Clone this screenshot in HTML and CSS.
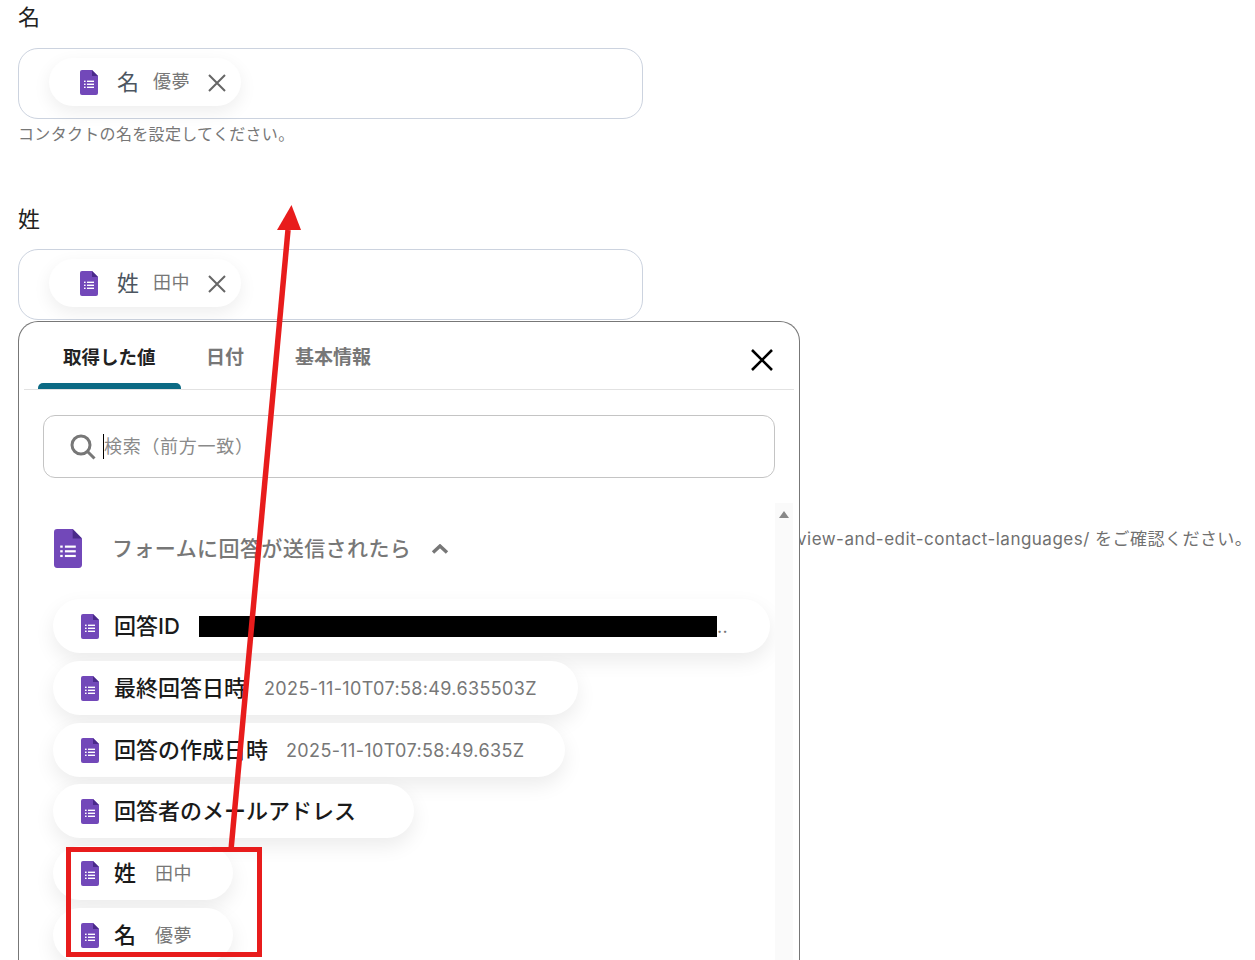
FILE: index.html
```html
<!DOCTYPE html>
<html lang="ja">
<head>
    <meta charset="UTF-8">
    <title>コンタクトの設定</title>
    <link rel="stylesheet" href="styles.css">
</head>
<body>
    <svg class="defs" width="0" height="0">
        <symbol id="forms" viewBox="0 0 18 25">
            <path d="M2 0H12L18 6V23A2 2 0 0 1 16 25H2A2 2 0 0 1 0 23V2A2 2 0 0 1 2 0Z" fill="#7248b9"/>
            <path d="M12 0L18 6H12Z" fill="#4a2a8a"/>
            <g fill="#fff">
                <rect x="4" y="10.6" width="1.6" height="1.4"/>
                <rect x="4" y="13.6" width="1.6" height="1.4"/>
                <rect x="4" y="16.6" width="1.6" height="1.4"/>
                <rect x="7" y="10.6" width="7" height="1.4"/>
                <rect x="7" y="13.6" width="7" height="1.4"/>
                <rect x="7" y="16.6" width="7" height="1.4"/>
            </g>
        </symbol>
    </svg>

    <div class="form">
        <label class="label">名</label>
        <div class="field">
            <div class="chip">
                <svg class="chip-icon"><use href="#forms"/></svg>
                <span class="chip-name">名</span>
                <span class="chip-value">優夢</span>
                <svg class="chip-x" viewBox="0 0 20 20"><path d="M2 2L18 18M18 2L2 18"/></svg>
            </div>
        </div>
        <p class="help">コンタクトの名を設定してください。</p>

        <label class="label label-second">姓</label>
        <div class="field">
            <div class="chip">
                <svg class="chip-icon"><use href="#forms"/></svg>
                <span class="chip-name">姓</span>
                <span class="chip-value">田中</span>
                <svg class="chip-x" viewBox="0 0 20 20"><path d="M2 2L18 18M18 2L2 18"/></svg>
            </div>
        </div>
        <p class="behind">view-and-edit-contact-languages/ をご確認ください。</p>
    </div>

    <div class="popup">
        <div class="tabs">
            <div class="tab active">取得した値</div>
            <div class="tab">日付</div>
            <div class="tab">基本情報</div>
            <svg class="close" viewBox="0 0 24 24"><path d="M2 2L22 22M22 2L2 22"/></svg>
        </div>

        <div class="search">
            <svg class="search-icon" viewBox="0 0 26 26"><circle cx="11" cy="11" r="9"/><path d="M17.5 17.5L24.5 24.5"/></svg>
            <span class="caret"></span>
            <span class="placeholder">検索（前方一致）</span>
        </div>

        <div class="results">
            <div class="list">
                <div class="group">
                    <svg class="group-icon"><use href="#forms"/></svg>
                    <span class="group-name">フォームに回答が送信されたら</span>
                    <svg class="chevron" viewBox="0 0 18 10"><path d="M2 8.5L9 2L16 8.5"/></svg>
                </div>
                <div class="row row-id">
                    <svg class="row-icon"><use href="#forms"/></svg>
                    <span class="row-name">回答ID</span>
                    <span class="redacted"></span>
                    <span class="row-value">..</span>
                </div>
                <div class="row">
                    <svg class="row-icon"><use href="#forms"/></svg>
                    <span class="row-name">最終回答日時</span>
                    <span class="row-value">2025-11-10T07:58:49.635503Z</span>
                </div>
                <div class="row">
                    <svg class="row-icon"><use href="#forms"/></svg>
                    <span class="row-name">回答の作成日時</span>
                    <span class="row-value">2025-11-10T07:58:49.635Z</span>
                </div>
                <div class="row row-mail">
                    <svg class="row-icon"><use href="#forms"/></svg>
                    <span class="row-name">回答者のメールアドレス</span>
                </div>
                <div class="row row-short">
                    <svg class="row-icon"><use href="#forms"/></svg>
                    <span class="row-name">姓</span>
                    <span class="row-value">田中</span>
                </div>
                <div class="row row-short">
                    <svg class="row-icon"><use href="#forms"/></svg>
                    <span class="row-name">名</span>
                    <span class="row-value">優夢</span>
                </div>
            </div>
            <div class="scrollbar"><span class="scroll-up"></span></div>
        </div>
    </div>

    <!-- annotation drawn over the screenshot -->
    <svg class="arrow" viewBox="0 0 73 650">
        <path d="M2 645L59 25" stroke="#e81c1c" stroke-width="5.5" fill="none"/>
        <path d="M62.5 0L48 25H72Z" fill="#e81c1c"/>
    </svg>
    <div class="highlight"></div>
</body>
</html>
```

FILE: styles.css
```css
html, body {
    height: 960px;
    margin: 0;
    overflow: hidden;
}
body {
    position: relative;
    background: #fff;
    font-family: "Inter", "Noto Sans CJK JP", sans-serif;
    color: #222;
}
.defs {
    position: absolute;
}
.form {
    padding: 3px 0 0 18px;
}
.label {
    display: block;
    font-size: 22px;
    line-height: 28px;
    color: #222;
}
.label-second {
    margin-top: 60px;
    margin-bottom: -1px;
}
.field {
    box-sizing: border-box;
    width: 625px;
    height: 71px;
    margin-top: 17px;
    padding: 9px 30px;
    border: 1px solid #ccd3df;
    border-radius: 20px;
}
.chip {
    display: inline-flex;
    align-items: center;
    box-sizing: border-box;
    height: 48px;
    padding: 0 14px 0 31px;
    border-radius: 24px;
    background: #fff;
    box-shadow: 0 6px 18px rgba(0, 0, 0, .07);
}
.chip-icon {
    width: 18px;
    height: 25px;
    margin-right: 19px;
}
.chip-name {
    font-size: 22px;
    color: #4c5560;
    margin: 0 14px 4px 0;
}
.chip-value {
    font-size: 18px;
    letter-spacing: .02em;
    color: #777;
    margin: 0 17px 4px 0;
}
.chip-x {
    width: 20px;
    height: 20px;
    margin-top: 2px;
}
.chip-x path {
    stroke: #666;
    stroke-width: 2;
    fill: none;
}
.help {
    margin: 4px 0 0;
    font-size: 16px;
    letter-spacing: .02em;
    line-height: 22px;
    color: #777;
}
.behind {
    margin: 208px 0 0 779px;
    font-size: 17px;
    letter-spacing: .48px;
    line-height: 22px;
    color: #707070;
    white-space: nowrap;
}
.popup {
    position: absolute;
    left: 18px;
    top: 321px;
    display: flex;
    flex-direction: column;
    box-sizing: border-box;
    width: 782px;
    height: 639px;
    padding: 0 5px;
    overflow: hidden;
    background: #fff;
    border: 1px solid #777;
    border-bottom: none;
    border-radius: 20px 20px 0 0;
}
.tabs {
    display: flex;
    align-items: flex-end;
    flex-shrink: 0;
    height: 67px;
    padding-left: 14px;
    border-bottom: 1px solid #e2e2e2;
}
.tab {
    box-sizing: border-box;
    height: 67px;
    padding: 24px 25px 0;
    font-size: 19px;
    line-height: 24px;
    font-weight: 700;
    color: #777;
}
.tab + .tab {
    padding-right: 26px;
}
.tab.active {
    position: relative;
    width: 143px;
    padding-top: 23px;
    font-size: 18.5px;
    color: #222;
}
.tab.active::after {
    content: "";
    position: absolute;
    left: 0;
    right: 0;
    bottom: 0;
    height: 6px;
    background: #0b6a84;
    border-radius: 5px 5px 0 0;
}
.close {
    width: 24px;
    height: 24px;
    margin: 0 20px 17px auto;
}
.close path {
    stroke: #000;
    stroke-width: 2.6;
    fill: none;
}
.search {
    display: flex;
    align-items: center;
    flex-shrink: 0;
    box-sizing: border-box;
    height: 63px;
    margin: 25px 19px 0;
    padding-left: 26px;
    border: 1px solid #c4c4c4;
    border-radius: 12px;
}
.search-icon {
    width: 26px;
    height: 26px;
    margin-right: 7px;
}
.search-icon circle,
.search-icon path {
    stroke: #777;
    stroke-width: 3;
    fill: none;
}
.caret {
    height: 25px;
    border-left: 1px solid #000;
}
.placeholder {
    font-size: 18px;
    letter-spacing: .7px;
    color: #8a8a8a;
    margin-bottom: 3px;
}
.results {
    display: flex;
    flex: 1;
    min-height: 0;
    margin-top: 25px;
}
.list {
    flex: 1;
    padding: 25px 0 0 30px;
}
.group {
    display: flex;
    align-items: center;
    height: 40px;
}
.group-icon {
    width: 28px;
    height: 39px;
    margin-right: 30px;
}
.group-name {
    font-size: 21px;
    letter-spacing: .02em;
    font-weight: 500;
    color: #777;
    margin: 0 20px 2px 0;
}
.chevron {
    width: 18px;
    height: 10px;
    margin-top: 2px;
}
.chevron path {
    stroke: #777;
    stroke-width: 3.4;
    fill: none;
}
.row {
    display: flex;
    align-items: center;
    box-sizing: border-box;
    width: fit-content;
    height: 54px;
    margin: 0 0 8px -1px;
    padding: 0 41px 0 28px;
    border-radius: 27px;
    background: #fff;
    box-shadow: 0 8px 20px rgba(0, 0, 0, .08);
}
.row-id {
    width: 717px;
    margin-top: 31px;
    padding-right: 0;
}
.row-mail {
    width: 361px;
    margin-top: -1px;
}
.row-short {
    width: 180px;
}
.row-icon {
    flex-shrink: 0;
    width: 18px;
    height: 25px;
    margin-right: 15px;
}
.row-name {
    font-size: 22px;
    font-weight: 500;
    color: #1a1a1a;
    margin: 0 18px 4px 0;
    white-space: nowrap;
}
.row-value {
    font-size: 18px;
    letter-spacing: .02em;
    color: #777;
    white-space: nowrap;
}
.row-short .row-name {
    margin-right: 19px;
}
.row-short .row-value {
    margin-bottom: 2px;
}
.redacted {
    width: 518px;
    height: 21px;
    margin-left: 1px;
    background: #000;
}
.scrollbar {
    width: 18px;
    background: #fafafa;
    margin-right: 1px;
}
.scroll-up {
    display: block;
    width: 0;
    margin: 8px auto 0;
    border-left: 5px solid transparent;
    border-right: 5px solid transparent;
    border-bottom: 7px solid #888;
}
.arrow {
    position: absolute;
    left: 229px;
    top: 205px;
    width: 73px;
    height: 650px;
    overflow: visible;
}
.highlight {
    position: absolute;
    left: 66px;
    top: 847px;
    box-sizing: border-box;
    width: 196px;
    height: 110px;
    border: 5px solid #e81c1c;
}
```
